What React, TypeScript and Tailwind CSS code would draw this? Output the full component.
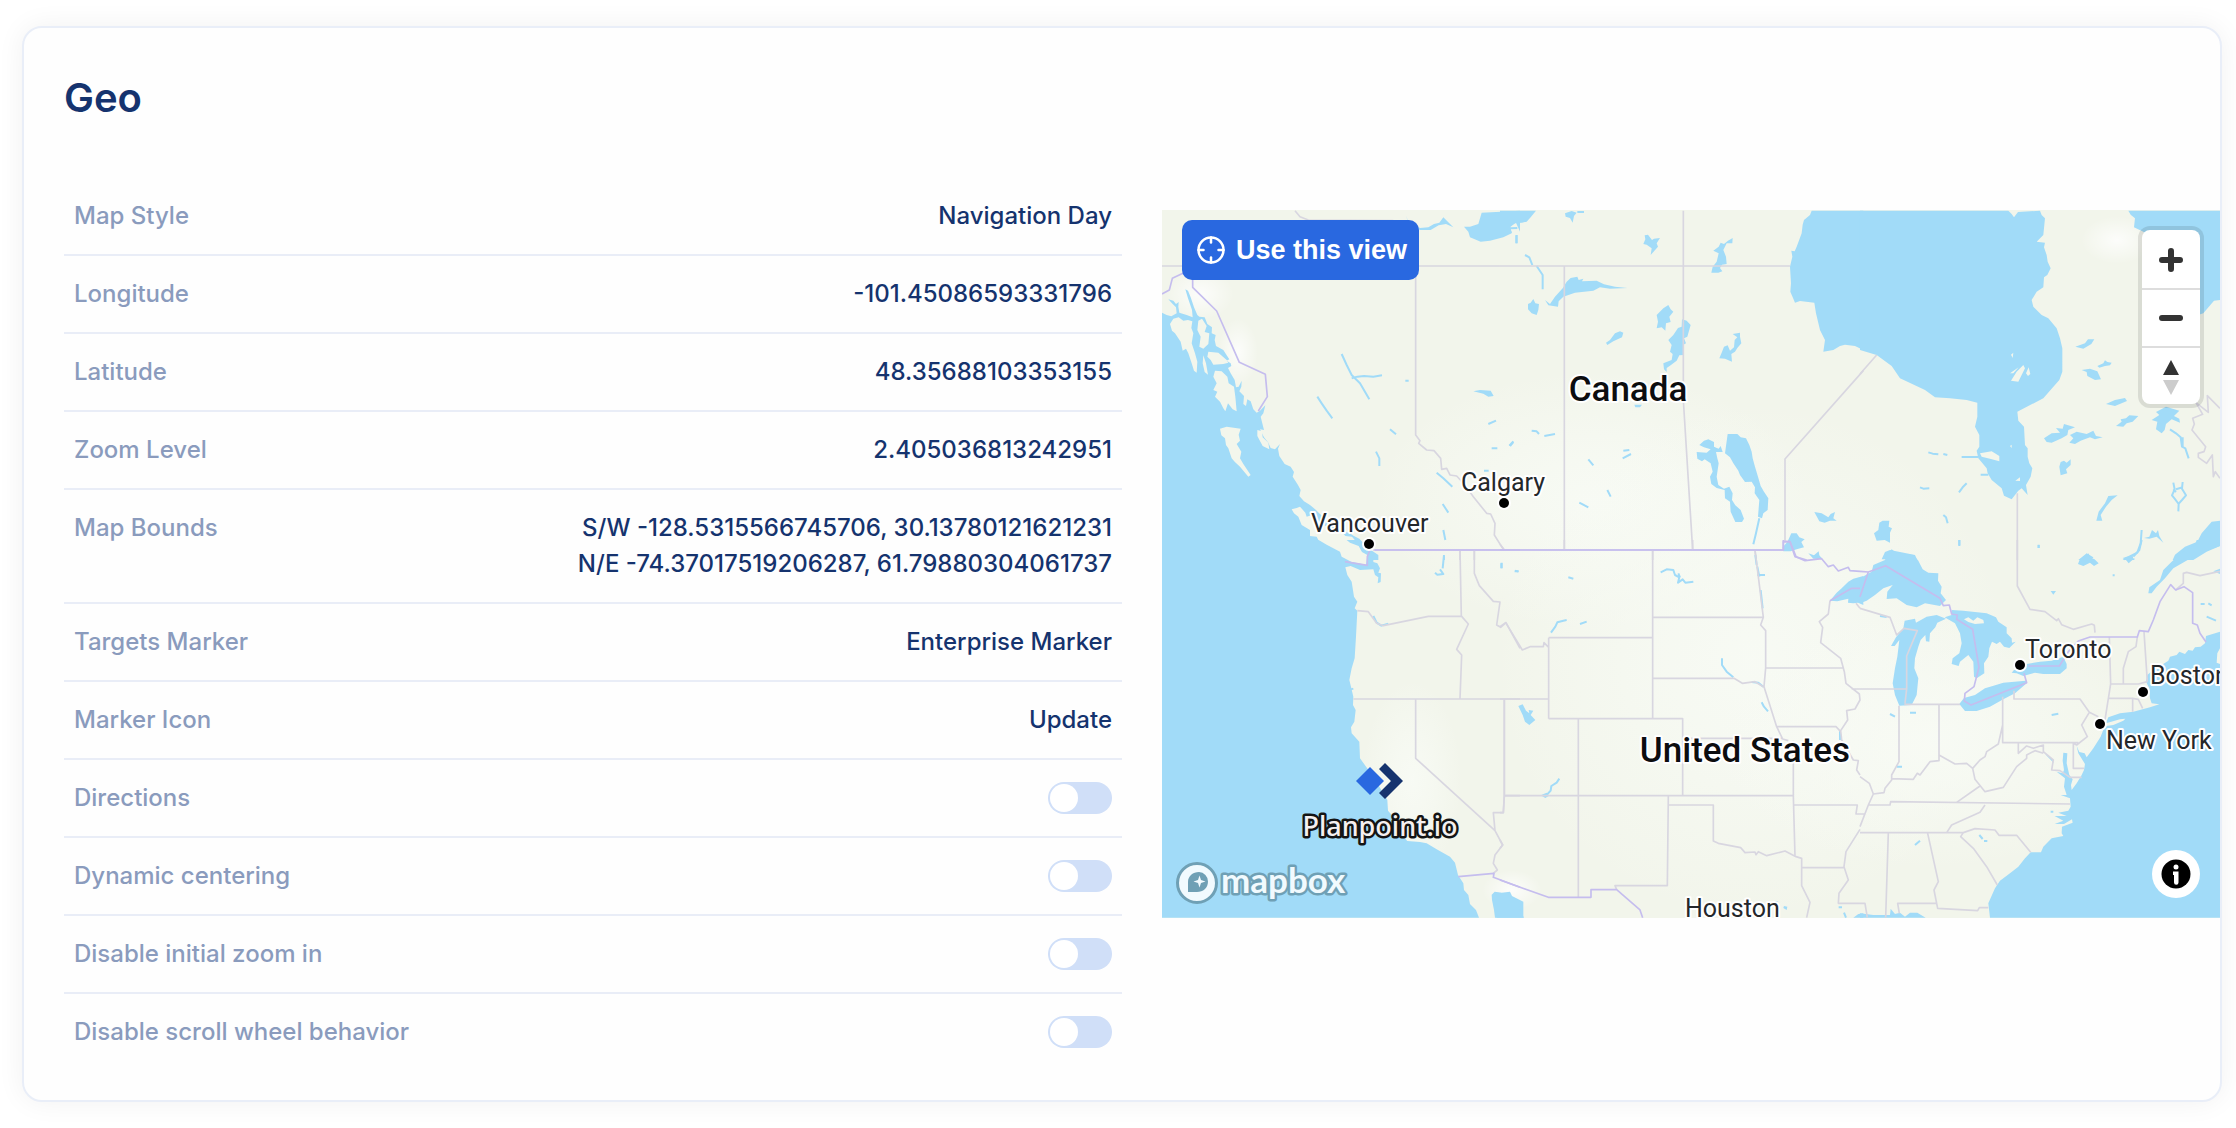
import React, { useState } from 'react';
import { Crosshair } from 'lucide-react';

interface DetailRowProps {
  label: string;
  children: React.ReactNode;
}

const DetailRow: React.FC<DetailRowProps> = ({ label, children }) => (
  <div className="flex items-start justify-between gap-6 border-b-2 border-[#e9edf7] px-2.5 py-5 text-2xl leading-9 font-medium">
    <dt className="text-[#8a9bbd]">{label}</dt>
    <dd className="text-right text-[#15336e]">{children}</dd>
  </div>
);

interface ToggleRowProps {
  id: string;
  label: string;
}

const ToggleRow: React.FC<ToggleRowProps> = ({ id, label }) => {
  const [enabled, setEnabled] = useState(false);

  return (
    <div className="flex items-center justify-between gap-6 border-b-2 border-[#e9edf7] px-2.5 py-5 text-2xl leading-9 font-medium last:border-b-0">
      <label htmlFor={id} className="text-[#8a9bbd]">
        {label}
      </label>
      <input
        id={id}
        type="checkbox"
        role="switch"
        checked={enabled}
        onChange={() => setEnabled(!enabled)}
        className="h-8 w-16 cursor-pointer appearance-none rounded-full bg-[#d0dff8] p-0.5 before:block before:size-7 before:rounded-full before:bg-white before:transition-transform checked:bg-[#2968e0] checked:before:translate-x-8"
      />
    </div>
  );
};

interface Tile {
  x: number;
  y: number;
  water: string;
  islands?: string;
  streams?: string;
  states: string;
  countries?: string;
}

// Vector tiles, drawn at 3 units per map pixel
const TILES: Tile[] = [
  {
    // Alaska panhandle, British Columbia
    x: -6,
    y: -30,
    water:
      'M6 1080V338L20 345 34 349 50 340 48 322 38 312 25 298 40 302 48 312 56 306 55 320 58 338 80 345 98 352 96 330 84 295 76 268 84 272 92 292 102 322 112 345 118 350 134 352 142 372 156 382 155 400 167 405 164 420 168 438 190 450 200 466 208 478 200 482 212 490 214 498 204 504 212 520 224 540 228 562 236 560 245 542 244 560 238 574 252 588 250 612 258 618 262 598 272 604 280 628 290 638 300 632 316 616 310 640 302 650 312 690 300 688 312 712 325 728 332 744 345 748 360 732 354 746 358 768 374 792 392 800 402 816 398 830 414 855 422 870 418 888 432 904 450 915 468 930 476 938 500 960 540 985 570 1002 598 1016 625 1045 655 1065V1080ZM738 48L746 66 780 84 805 82 822 72 838 68 850 52 862 64 880 82 858 72 836 76 812 90 780 90 748 76ZM912 80L930 80 955 72 965 38 1080 32V95L1068 68 1050 78 1055 100 1030 112 990 122 962 125 930 112 925 95ZM940 574L960 570 992 572 1001 588 985 590 970 581Z',
    islands:
      'M30 372L40 356 56 352 70 362 84 360 97 364 94 384 100 400 95 430 105 460 112 485 110 518 102 512 95 490 85 460 78 446 68 452 62 425 45 400 36 392ZM115 362L126 356 140 378 134 396 148 400 145 432 130 446 118 440 122 410 112 390ZM145 455L175 458 200 480 205 488 190 492 160 494 152 480 142 470ZM130 466L138 490 144 524 134 516 128 490ZM165 512L185 514 202 530 206 550 222 560 226 590 230 634 218 628 204 610 196 634 190 625 180 605 165 590 172 575 160 570 170 550 160 530ZM180 686L200 680 242 686 236 704 240 722 230 732 244 755 240 775 250 792 272 825 265 830 240 800 224 785 215 775 205 745 198 735 195 715 184 706ZM292 690L306 694 308 712 325 728 328 748 308 738 292 708ZM395 928L410 924 420 920 436 938 440 950 454 946 470 965 488 975 520 985 540 988 556 1008 576 1010 598 1036 618 1050 620 1080H545L540 1060 500 1035 478 1026 470 1010 450 1008 450 990 425 975 415 950 402 940Z',
    streams:
      'M545 462L560 495 575 525 600 550 628 598M575 535L592 530 612 528 640 530 666 526M472 590L485 610 500 632 517 655M690 688L708 703M648 755L658 775V798M830 818L850 835 877 860M848 912L865 938M850 990L856 1020M736 542H746M985 672L1008 662M995 745H1012M1050 738L1060 726M972 812H986M852 1068V1080M132 374L136 398M84 392V406M214 712H222M565 1000L590 1020 606 1034M1070 105V130',
    states:
      'M6 198H1020M405 32L420 50 445 60 700 62M767 198V705L780 722 776 730 800 750 822 752 842 775 845 808 860 805 870 825 890 828 915 855 940 890 980 940 992 942 1005 970 1003 1005 1030 1048M900 1050V1080M943 1050V1080',
    countries: 'M6 282L28 270 37 235 72 218 98 235V262L170 333 238 487 316 523 322 590 295 633M640 1050H1080M622 1080L630 1060',
  },
  {
    // Prairies
    x: 1014,
    y: -30,
    water:
      'M0 32H108L92 52 80 65 66 68 45 70 30 82 36 98 0 108ZM935 32L930 45 912 60 908 74 905 100 890 140 884 154 874 152 877 170 870 200 873 250 871 275 880 296 885 308 900 303 943 308 948 340 960 390 975 420 970 455 1000 450 1020 438 1035 434 1065 438 1090 450V32ZM135 300L150 312 165 290 188 265 200 245 212 234 232 230 236 240 250 236 246 244 290 242 312 253 345 260 382 264 330 266 300 262 280 272 225 278 190 290 176 304 174 320 145 316ZM84 312L92 308 100 297 106 310 117 312 115 330 110 345 95 340 84 328ZM195 40L215 33 230 38 222 48 218 68 210 54 197 50ZM430 132L436 118 434 106 444 104 456 120 462 116 480 114 470 130 474 140 452 165 455 145 440 134ZM640 152L656 140 662 128 672 132 684 122 698 114 697 130 680 130 670 150 678 170 680 192 666 194 660 204 667 214 655 218 634 218 638 200 650 185 656 160ZM470 385L474 365 470 345 490 325 505 315 512 328 520 335 508 350 512 366 498 370 496 392 485 382ZM505 420L520 405 534 384 545 380 546 358 560 362 572 375 562 410 552 415 558 430 550 434 550 465 538 466 530 482 512 496 500 504 500 516 492 508 490 490 515 480 518 462 510 455 515 435ZM318 428L330 420 345 400 360 394 370 398 366 412 340 424 322 435ZM658 475L665 458 672 440 683 436 690 452 702 442 704 420 712 412 698 402 720 398 720 410 724 430 712 444 705 455 694 462 696 485 675 476ZM403 614L426 614 420 622 406 622ZM683 702L712 702 722 712 738 715 748 735 755 755 758 775 765 800 774 830 782 858 792 875 805 895 803 930 790 940 786 955 774 950 778 900 764 880 765 862 755 845 735 846 720 825 715 812 700 790 690 772 675 760ZM598 735L612 722 625 718 642 726 642 740 656 746 662 738 668 756 648 756 652 775 656 790 650 830 655 855 672 866 688 860 698 880 696 900 706 916 722 930 732 956 726 966 706 966 692 935 690 905 675 895 674 870 650 864 634 852 630 830 638 815 632 790 614 778 606 784 592 776 590 756 620 758 632 748 612 742ZM943 936L965 940 985 952 992 942 1005 936 1000 955 1010 962 990 962 974 968 958 964ZM850 1054L848 1042 862 1026 874 1000 890 1000 898 1012 914 1018 904 1026 912 1042 890 1048 872 1054ZM925 1060L942 1066 956 1054 958 1066 968 1078 940 1076Z',
    streams:
      'M75 165L88 172 97 195M110 198L128 225V268M30 85L52 84M49 106V130M778 955L768 1000 760 1033M95 692L110 694 117 702M133 708L165 702M28 737L40 724M265 778L280 796M370 752L388 750M368 775L393 762M322 870L332 890M238 908L265 922M232 36H252',
    states: 'M0 198H870M193 198V1050M550 32V600L578 1050M1090 512L855 777V1025M458 1050V1080M765 1050L768 1080M0 1033L12 1048',
    countries: 'M0 1050H850V1025L870 1025 885 1070 920 1080',
  },
  {
    // Hudson Bay, Quebec
    x: 2094,
    y: -30,
    water:
      'M0 32H445L455 42 462 52 474 36 540 32 545 45 555 55 550 105 530 125 555 128 552 142 560 165 563 185 572 205 562 225 552 232 550 262 530 275 515 300 520 320 545 345 565 355 590 385 600 415 607 445V515L598 540 550 595 472 635 475 662 492 680 495 735 503 745 503 770 508 790 517 805 512 830 498 855 503 885 485 865 475 872 455 898 432 887 425 865 395 840 383 820 380 805 355 775 350 752 358 740V705L345 680 352 650V608L320 600 270 595 225 592 195 570 120 535 95 498 50 465 0 450ZM805 32H1080V300L1062 302 1030 340 1012 346 850 95 822 82 825 55 812 44ZM646 440L675 430 684 418 703 418 694 432 670 446ZM665 510L690 506 712 514 723 538 705 540 682 528 680 516ZM712 498L730 490 735 481 742 486 755 488 750 496 735 498 718 503ZM738 612L765 600 795 594 801 603 765 618ZM768 678L785 665 782 658 798 655 808 646 835 648 818 665 800 670 790 680ZM552 715L575 700 600 698 588 684 608 686 612 672 645 682 625 690 622 705 605 715 575 728 560 726ZM630 705L650 695 680 702 700 692 708 708 728 712 705 718 690 712 662 722 645 732 628 728 640 715ZM598 800L602 786 612 782 620 788 632 778 632 795 618 808 622 820 602 826ZM875 660L898 645 888 636 918 620 958 632 942 648 958 656 960 668 935 658 918 672 914 690 905 700 888 688 892 665ZM709 962L716 935 735 910 745 888 773 886 755 900 738 920 722 945 727 962ZM852 1014L868 1010 876 990 888 1000 894 990 898 1008 910 1028 890 1010 868 1016ZM938 1080L945 1064 975 1040 1012 1025 1025 1000 1055 965 1080 962V1038L1040 1055 1000 1080ZM42 1000L55 990 58 968 68 962 88 962 86 980 96 985 90 998 90 1028 74 1020 50 1022ZM65 1078L75 1056 90 1050 165 1065 172 1080ZM655 1080L680 1060 700 1072 696 1080ZM788 1080L800 1070 825 1076 822 1080Z',
    islands:
      'M360 760L395 754 418 768 418 784 390 776 365 770ZM453 542L470 515 490 495 495 505 475 545ZM450 520L476 502 460 520ZM498 520L506 502 511 522 504 528ZM466 842L480 832V843ZM453 464L460 458 458 474ZM450 738L455 734V744Z',
    streams:
      'M205 757L218 761 235 763M250 762L262 765M305 771H355M180 862L190 866 208 865M297 877L308 862 320 850M250 945L258 952 263 970M362 824H385M298 1020V1038M536 1034V1044M930 688L948 700 962 712 966 740 976 745 986 775M968 712V740M512 129L530 125M845 990L842 1030 832 1058 792 1078M940 848L944 868 936 886 944 896 956 912 955 934M968 846L966 866 978 886 966 900 957 910M948 868L968 862M940 868L948 876',
    states: 'M0 522L50 465M472 880V1080M1080 625L1042 587 1045 637 1008 608 1028 643 998 655 1003 672 996 690 1037 740 1032 755 1015 760V772L1040 790 1057 765 1060 830 1066 815 1080 835',
  },
  {
    // Pacific coast
    x: -6,
    y: 990,
    water:
      'M6 0V1133H957L948 1110 930 1092 925 1065 912 1050 910 1030 894 1005 885 968 870 950 830 928 800 910 780 906 742 903 720 880 700 830 684 812 682 780 640 710 600 655 598 605 575 580 573 562 583 545 587 510 579 495 580 470 573 440 568 420 575 385 584 355 588 290 592 212 584 205 592 185 582 170 575 125 562 105 556 82 572 78 600 90 640 88 645 105 655 112 653 130 662 126 663 100 655 98 660 85 652 70 640 66 640 40 625 28 595 0ZM1005 1133L1002 1110 996 1080 995 1064 1004 1055 1025 1058 1050 1055 1056 1068 1090 1085V1133Z',
    islands: 'M476 0L500 14 540 35 545 50 575 66 618 74 622 45 606 36 596 18 570 8 560 0Z',
    streams: 'M852 45L848 85M825 98L832 104 850 102 840 88M1025 68V85M1064 94H1076M640 228L650 248 664 257 685 251M570 449L580 446',
    states:
      'M592 212L625 215 650 250 670 257 805 229H905L925 252 890 328 905 345 900 476M900 30L904 229M943 30V100L958 137 1000 184 1020 186 1010 255 1022 262 1038 248 1080 325M580 477H1080M767 477V655L1005 872 1028 915 1005 945 1000 970 1012 990 1000 1000M1033 477V767L1030 818H1000L1005 872M1033 767H1080',
    countries: 'M645 30H1080M630 30L622 50V76L555 65M895 1010L1002 1000 1000 1012 1080 1042',
  },
  {
    // Great Plains, Texas
    x: 1014,
    y: 990,
    water:
      'M990 182L1010 158 1025 145 1045 125 1060 116 1090 108V195L1074 188 1060 190 1044 188 1045 176 1012 184ZM-10 1058L25 1060 30 1070 54 1080 58 1105 72 1133H-10ZM55 498L68 493 78 512 88 520 86 510 100 512 92 525 106 540 88 555 75 545 68 525ZM852 1098L862 1100 860 1110 850 1104ZM1060 1133L1075 1122 1090 1120V1133ZM122 766L140 758 146 768 136 774Z',
    streams:
      'M482 97L500 88 520 90 525 105 538 112 534 128 548 118 556 128 580 125M535 100L540 112M766 45L770 75M772 105H795M772 80L778 110M782 150L788 205M666 355L666 375 680 395 700 412M755 426L775 428 790 440M785 487L792 500 804 514M140 765L152 752 154 738 170 728 178 716M153 278L166 260 172 247 190 242 200 240M240 252L260 245M205 112L220 116M45 92L55 95M4 70V85M1020 570V600M826 1085L834 1088M1016 1102H1026M1032 1118L1038 1133',
    states:
      'M193 0V30M578 0V30M0 260L17 248 67 330 90 320H130L132 308 146 322M146 293H458M146 293V536M458 30V536M765 30L775 110 790 232 782 255 797 272V384L792 440 830 560 848 597 865 602M458 232H790M458 415H702L727 430 765 425 795 443M146 536H548V767M0 477H146M13 477V767L10 818H0M0 900L8 915 0 925M13 767H880M235 536V1072M548 595H848M830 560H1008L1022 575M797 384H1030M505 767L502 1037H345L350 1049M505 795H640V903L655 910 722 923 735 938 765 936 768 944 775 935 800 947 855 933 888 950 905 955V1037L930 1087 920 1133M880 602V767L885 948M880 795H1072L1068 822H1080M905 983H1032M990 182L985 222 958 245 968 262 962 308 1022 355 1033 395 1038 430 1078 462 1080 480 1065 507 1040 512 1043 540 1022 572 1025 600 1060 660 1075 662 1070 690 1080 705M1080 868L1038 935 1032 980 1045 1020 1017 1060 1015 1090H1080M1055 447H1080M1068 190L1080 205',
    countries: 'M0 30H850V0M0 1020L145 1072H273V1049H350L420 1110 428 1133M850 5L870 5 888 50 915 62 965 56 985 80 1000 75 1015 93 1045 82 1050 92 1080 94M990 182L1055 145H1080',
  },
  {
    // Great Lakes, Atlantic coast
    x: 2094,
    y: 990,
    water:
      'M0 115L35 95 40 75 75 60 85 38 95 28 110 40 160 45 175 62 188 88 205 98 235 100 234 122 245 140 242 160 258 180 240 198 195 190 170 202 140 195 110 175 80 177 82 155 98 135 70 145 45 165 20 182 0 190ZM93 318L108 292 130 265 134 242 165 236 168 248 200 230 230 225 258 236 232 248 226 262 210 280 208 305 198 304 196 285 182 300 175 320 165 355 163 385 175 415 170 465 155 495 118 497 105 465 98 430 105 385 112 350 118 300 104 318ZM254 232L275 225 275 210 310 212 380 220 408 232 415 245 440 262 440 280 455 295 456 308 467 305 448 324 432 320 420 305 410 312 396 305 388 325 385 350 372 370 373 400 350 415 342 410 340 365 325 345 300 365 296 378 275 372 278 355 298 340 305 310 300 280 285 250ZM298 492L312 474 345 465 375 445 398 438 430 428 497 422 500 430 465 460 430 478 390 500 350 513 315 513ZM455 398L462 390 490 386 500 372 540 365 575 362 610 350 620 372 620 385 600 402 550 402 525 398 490 408 470 400ZM1080 275L1038 288 1035 310 1022 320 1005 322 998 332 985 330 975 342 958 335 950 345 930 350 925 362 905 375 892 368 885 385 862 405 858 425 868 445 870 475 875 490 898 493 870 502 820 515 780 520 745 532 738 548 722 590 700 625 680 652 674 640 658 636 650 618 655 640 675 672 672 690 665 705 650 730 635 750 633 735 638 718 628 705 620 670 622 640 610 638 608 662 612 690 608 700 590 695 615 715 612 740 620 765 602 765 630 775 632 800 625 812 595 818 620 828 584 828 610 842 584 852 612 852 636 838 638 848 606 860 605 880 610 888 575 895 550 920 543 937 512 937 495 955 475 980 450 1000 420 1022 405 1045 385 1090 390 1133H1080ZM865 160L868 142 900 120 910 90 935 65 965 38 1005 15 1010 0H1080V18L1040 32 1000 50 940 85 915 115 890 140 875 160ZM0 1120L40 1125 90 1125 92 1106 105 1122 120 1118 135 1130 150 1118 172 1118 197 1133H0ZM654 72L660 56 670 60 685 40 694 58 702 56 716 70 702 78 690 68 670 78ZM788 54L818 46 820 58 806 70 798 60ZM572 153H588L580 164ZM1060 94L1080 86V102ZM555 642L575 655 582 670Z',
    islands: 'M312 238L325 232 340 242 352 232 370 240 372 250 345 252 325 246ZM738 550L780 538 796 536 790 542 760 555 738 558ZM1072 340L1080 325V372L1070 368Z',
    streams:
      'M90 522L105 530M150 518H168M575 525L595 521M1040 230L1068 242M1022 192H1034M1045 190L1055 196M165 915L180 902M110 680H126M358 885L368 897M372 903H382M758 106H764M60 228L80 231M536 15V24M298 0V16M845 0L838 30 820 50M572 815H580',
    states:
      'M0 205L90 232 110 285 132 265 172 272 140 348V447L135 490M0 447H140M117 497V665L95 705V720L75 745 72 758 40 762 25 795 0 860M133 493H300M237 495V662L210 665 180 705 172 700 160 718 95 716M237 645L285 672 320 670 338 685 360 660 375 650 380 635 415 612 428 555M428 470V608H655M462 452V477H660L688 517 715 530M688 517L665 555 682 590 650 615 640 610V685H672M338 685L345 718 375 755 430 742 470 680 500 655 500 645 525 632 550 640M475 608V640L500 618 520 625 550 615 550 635 580 660 575 690 600 692 630 712H665M360 738L290 787M25 795H90L92 785 630 792M0 878H310L345 866 405 870 417 886H470L512 937M375 795L360 817 275 855 260 878M0 710L28 730 40 762M0 822H15M310 878L302 890 340 925 380 980 412 1035M203 880L235 1025 222 1050 233 1105 353 1112 358 1103H385M85 878L77 1133M0 1090H15L22 1133M118 1120L113 1090H228M472 0V138L510 208 555 215 590 242 595 236 605 254 640 268 695 252 703 256 705 278M748 291L752 432 735 540M752 432H835L862 425M852 275L862 425M832 291L828 320 805 335 790 385V432M745 475H818V515M818 475L835 478 848 505M947 150L970 130V100L980 97 1020 107 1080 94',
    countries:
      'M0 94L25 96 77 77 240 175 250 197 268 195 275 222 292 225 290 238 338 268 357 382 342 440 315 460 313 483 333 495 500 428 492 400M505 378H598L625 335 655 303 690 291H832L838 272 865 275 880 240 900 185 932 134 947 150 972 140 998 158V250L1012 255 1020 280 1038 306M0 170L25 96',
  },
];

const CITIES = [
  { name: 'Vancouver', x: 149, y: 322, dotX: 207, dotY: 334 },
  { name: 'Calgary', x: 299, y: 281, dotX: 342, dotY: 293 },
  { name: 'Toronto', x: 863, y: 448, dotX: 858, dotY: 455 },
  { name: 'Boston', x: 988, y: 474, dotX: 981, dotY: 482 },
  { name: 'New York', x: 944, y: 539, dotX: 938, dotY: 514 },
];

const MapCanvas: React.FC = () => (
  <svg
    viewBox="0 0 1058 708"
    preserveAspectRatio="xMidYMid slice"
    className="block size-full"
    role="img"
    aria-label="Map of North America"
  >
    <defs>
      <radialGradient id="plains">
        <stop offset="0" stopColor="#f8fbf5" stopOpacity="0.9" />
        <stop offset="0.4" stopColor="#f8fbf5" stopOpacity="0.6" />
        <stop offset="1" stopColor="#f8fbf5" stopOpacity="0" />
      </radialGradient>
      <radialGradient id="snow">
        <stop offset="0" stopColor="#fff" stopOpacity="0.8" />
        <stop offset="1" stopColor="#fff" stopOpacity="0" />
      </radialGradient>
    </defs>
    <rect width="1058" height="708" fill="#f2f5eb" />
    <g fill="url(#plains)">
      <ellipse cx="430" cy="290" rx="220" ry="130" />
      <ellipse cx="590" cy="450" rx="260" ry="260" />
      <ellipse cx="770" cy="530" rx="220" ry="130" />
      <ellipse cx="250" cy="570" rx="50" ry="100" />
    </g>
    <g fill="url(#snow)">
      <ellipse cx="38" cy="84" rx="34" ry="26" />
      <ellipse cx="76" cy="142" rx="20" ry="34" />
      <ellipse cx="955" cy="30" rx="36" ry="24" />
      <ellipse cx="350" cy="680" rx="30" ry="20" />
    </g>
    <g transform="scale(0.33333)" fill="none" strokeLinejoin="round">
      {TILES.map((tile) => (
        <g key={`${tile.x}:${tile.y}`} transform={`translate(${tile.x} ${tile.y})`}>
          <path d={tile.water} fill="#a1dbf8" />
          <path d={tile.streams} stroke="#a1dbf8" strokeWidth="6" />
          <path d={tile.islands} fill="#f3f6ec" />
          <path d={tile.states} stroke="#d8d6e0" strokeWidth="5" />
          <path d={tile.countries} stroke="#c5bdee" strokeWidth="5" />
        </g>
      ))}
    </g>
    <g
      fill="#24272b"
      stroke="#fff"
      strokeWidth="4"
      strokeLinejoin="round"
      style={{ paintOrder: 'stroke' }}
      className="font-['Roboto',sans-serif]"
    >
      {CITIES.map((city) => (
        <React.Fragment key={city.name}>
          <text x={city.x} y={city.y} fontSize="25">
            {city.name}
          </text>
          <circle cx={city.dotX} cy={city.dotY} r="5" fill="#000" />
        </React.Fragment>
      ))}
      <text x="523" y="707" fontSize="25">
        Houston
      </text>
      <g fill="#0c0d0f" fontSize="35" fontWeight="500" textAnchor="middle">
        <text x="466" y="191">
          Canada
        </text>
        <text x="583" y="552">
          United States
        </text>
      </g>
    </g>

    {/* Project marker */}
    <path d="M208 557L222 571 208 585 194 571Z" fill="#2968e0" />
    <path d="M223 553L241 571 223 589 217 583 229 571 217 559Z" fill="#15336e" />
    <text
      x="218"
      y="626"
      fontSize="27"
      fontWeight="500"
      textAnchor="middle"
      fill="#f5f0f0"
      stroke="#141414"
      strokeWidth="5"
      strokeLinejoin="round"
      style={{ paintOrder: 'stroke' }}
      className="font-['Noto_Sans',sans-serif]"
    >
      Planpoint.io
    </text>
  </svg>
);

const MapboxLogo: React.FC = () => (
  <svg width="180" height="50" viewBox="0 0 180 50" aria-hidden="true">
    <circle cx="23" cy="23" r="19.5" fill="#f1fafe" stroke="#6fa0b5" strokeWidth="3" />
    <path d="M14 32V22C14 16 19 12 25 12A9.500 9.500 0 0 1 34 21.500C34 28 29 32 23 32Z" fill="#6fa0b5" />
    <path d="M25.500 15.500L27 20 31.500 21.500 27 23 25.500 27.500 24 23 19.500 21.500 24 20Z" fill="#f1fafe" />
    <text
      x="47"
      y="33"
      fontSize="35"
      fontWeight="700"
      fill="#f1fafe"
      stroke="#6fa0b5"
      strokeWidth="5"
      strokeLinejoin="round"
      style={{ paintOrder: 'stroke' }}
      className="font-['Lato',sans-serif]"
    >
      mapbox
    </text>
  </svg>
);

const MapControls: React.FC = () => (
  <div className="absolute top-5 right-5 flex w-[58px] flex-col overflow-clip rounded-lg bg-white shadow-[0_0_0_4px_rgba(0,0,0,0.1)]">
    <button type="button" aria-label="Zoom in" className="flex h-[58px] items-center justify-center">
      <svg width="56" height="56" viewBox="0 0 56 56" stroke="#333" strokeWidth="6" strokeLinecap="round">
        <path d="M19 29H37M28 20V38" />
      </svg>
    </button>
    <button
      type="button"
      aria-label="Zoom out"
      className="flex h-[58px] items-center justify-center border-t-2 border-[#ddd]"
    >
      <svg width="56" height="56" viewBox="0 0 56 56" stroke="#333" strokeWidth="6" strokeLinecap="round">
        <path d="M19 28H37" />
      </svg>
    </button>
    <button
      type="button"
      aria-label="Reset bearing to north"
      className="flex h-[58px] items-center justify-center border-t-2 border-[#ddd]"
    >
      <svg width="56" height="56" viewBox="0 0 56 56">
        <path d="M20 27H36L28 12Z" fill="#333" />
        <path d="M20 32H36L28 47Z" fill="#ccc" />
      </svg>
    </button>
  </div>
);

const MapPreview: React.FC = () => (
  <div className="relative mt-8 h-[708px] overflow-hidden">
    <MapCanvas />
    <button
      type="button"
      className="absolute top-2.5 left-5 flex h-15 items-center gap-2.5 rounded-[10px] bg-[#2968e0] pr-3 pl-3.5 font-['Liberation_Sans',sans-serif] text-[27px] font-bold text-white"
    >
      <Crosshair className="size-[30px]" strokeWidth={2} />
      <span>Use this view</span>
    </button>
    <MapControls />
    <a href="#mapbox" aria-label="Mapbox" className="absolute bottom-2 left-3">
      <MapboxLogo />
    </a>
    <button
      type="button"
      aria-label="Toggle attribution"
      className="absolute right-5 bottom-5 flex size-12 items-center justify-center rounded-full bg-white"
    >
      <svg width="30" height="30" viewBox="0 0 30 30">
        <circle cx="15" cy="15" r="14.5" />
        <circle cx="15" cy="8" r="2.5" fill="#fff" />
        <path d="M12 12.500H17.500V23.500a2 2 0 0 1-4.500 0V16H12Z" fill="#fff" />
      </svg>
    </button>
  </div>
);

export default function App() {
  return (
    <main className="min-h-screen bg-white pt-[26px] pr-3.5 pb-[26px] pl-[22px] font-['Inter',sans-serif]">
      <section className="rounded-[20px] border-2 border-[#e9eef8] bg-[#fefefe] pt-10 pb-[30px] pl-10 shadow-[0_0_28px_rgba(0,0,0,0.06)]">
        <h2 className="text-[40px] leading-[60px] font-semibold text-[#15336e]">Geo</h2>

        <div className="mt-[50px] grid grid-cols-2 items-start gap-10">
          <div>
            <dl>
              <DetailRow label="Map Style">Navigation Day</DetailRow>
              <DetailRow label="Longitude">-101.45086593331796</DetailRow>
              <DetailRow label="Latitude">48.35688103353155</DetailRow>
              <DetailRow label="Zoom Level">2.405036813242951</DetailRow>
              <DetailRow label="Map Bounds">
                <p>S/W -128.5315566745706, 30.13780121621231</p>
                <p>N/E -74.37017519206287, 61.79880304061737</p>
              </DetailRow>
              <DetailRow label="Targets Marker">Enterprise Marker</DetailRow>
              <DetailRow label="Marker Icon">
                <button type="button" className="block cursor-pointer">
                  Update
                </button>
              </DetailRow>
            </dl>
            <ToggleRow id="directions" label="Directions" />
            <ToggleRow id="dynamic-centering" label="Dynamic centering" />
            <ToggleRow id="disable-initial-zoom" label="Disable initial zoom in" />
            <ToggleRow id="disable-scroll-wheel" label="Disable scroll wheel behavior" />
          </div>

          <MapPreview />
        </div>
      </section>
    </main>
  );
}
